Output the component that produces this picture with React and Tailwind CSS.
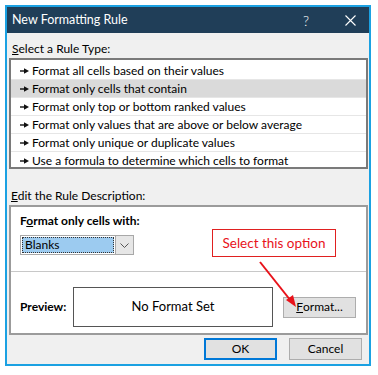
import React from "react";

// Rule type list shown in the top list box
const RULE_TYPES = [
  "Format all cells based on their values",
  "Format only cells that contain",
  "Format only top or bottom ranked values",
  "Format only values that are above or below average",
  "Format only unique or duplicate values",
  "Use a formula to determine which cells to format",
];

const FONT = { fontFamily: "Lato, 'Open Sans', sans-serif" };

function RuleArrow() {
  return (
    <svg width="9" height="6" viewBox="0 0 9 6" className="shrink-0">
      <path d="M0 3H5" stroke="#111" strokeWidth="1.4" />
      <path d="M4 0.2L9 3L4 5.8Z" fill="#111" />
    </svg>
  );
}

function Btn({ children, primary }) {
  return (
    <div
      className={
        "flex h-[22px] w-[73px] items-center justify-center bg-[#e1e1e1] text-[12px] text-black " +
        (primary ? "border-2 border-[#0078d7]" : "border border-[#adadad]")
      }
    >
      {children}
    </div>
  );
}

export default function App() {
  return (
    <div className="relative h-[375px] w-[378px] bg-white" style={FONT}>
      {/* Dialog */}
      <div className="ml-[5px] pt-[5px]">
        <div className="flex h-[361px] w-[366px] flex-col border-2 border-[#1ba1e2] bg-[#f0f0f0]">
          {/* Title bar */}
          <div className="flex h-[26px] shrink-0 items-center bg-[#203e58] pl-[5px] text-[12.5px] text-white">
            <span className="flex-1">New Formatting Rule</span>
            <span className="mr-[36px] text-[14px] font-light">?</span>
            <svg width="11" height="11" viewBox="0 0 11 11" className="mr-[13px]">
              <path d="M0.5 0.5L10.5 10.5M10.5 0.5L0.5 10.5" stroke="#fff" strokeWidth="1.1" />
            </svg>
          </div>

          {/* Select a Rule Type */}
          <div className="mt-[8px] pl-[5px] text-[12px] leading-[16px] text-black">
            <span className="underline">S</span>elect a Rule Type:
          </div>
          <div className="ml-[2px] mr-[1px] mt-[1px] h-[111px] overflow-hidden border-2 border-[#7a7a7a] bg-white pt-[2px]">
            {RULE_TYPES.map((rule, i) => (
              <div
                key={rule}
                className={
                  "flex h-[18px] items-center gap-[3px] border-b border-[#e6e6e6] pl-[9px] text-[12px] text-black " +
                  (i === 1 ? "bg-[#dadada]" : "")
                }
              >
                <RuleArrow />
                <span>{rule}</span>
              </div>
            ))}
          </div>

          {/* Edit the Rule Description */}
          <div className="mt-[19px] pl-[4px] text-[12px] leading-[16px] text-black">
            <span className="underline">E</span>dit the Rule Description:
          </div>
          <div className="ml-[2px] mr-[1px] mt-[1px] flex h-[130px] flex-col border-2 border-[#9b9b9b] bg-white">
            <div className="pl-[9px] pt-[6px] text-[12px] font-bold leading-[16px] text-black">
              F<span className="underline">o</span>rmat only cells with:
            </div>
            <div className="ml-[9px] mt-[6px] flex h-[20px] w-[114px] border border-[#a8a8a8] bg-white">
              <div className="m-[1px] flex flex-1 items-center border border-dotted border-[#333] bg-[#9ccbf0] pl-[2px] text-[12px] text-black">
                Blanks
              </div>
              <div className="flex w-[18px] items-center justify-center border-l border-[#a8a8a8] bg-[#e6e6e6]">
                <svg width="9" height="5" viewBox="0 0 9 5">
                  <path d="M0.5 0.5L4.5 4.5L8.5 0.5" stroke="#555" strokeWidth="1" fill="none" />
                </svg>
              </div>
            </div>
            <div className="mt-[16px] border-t border-[#c8c8c8]" />
            <div className="mt-[15px] flex items-center">
              <div className="w-[62px] pl-[9px] text-[12px] font-bold text-black">Preview:</div>
              <div className="flex h-[40px] w-[200px] items-center justify-center border border-[#555] bg-white text-[13px] text-black">
                No Format Set
              </div>
              <div className="ml-[10px] flex h-[21px] w-[73px] items-center justify-center border border-[#adadad] bg-[#e1e1e1] text-[12px] text-black">
                <span className="underline">F</span>ormat...
              </div>
            </div>
          </div>

          {/* Footer buttons */}
          <div className="mt-[3px] flex justify-end gap-[12px] pr-[7px]">
            <Btn primary>OK</Btn>
            <Btn>Cancel</Btn>
          </div>
        </div>
      </div>

      {/* Annotation callout */}
      <div className="absolute left-[212px] top-[229px] flex h-[28px] w-[124px] items-center justify-center border border-[#e02020] bg-white text-[13.5px] text-[#e8121a]">
        Select this option
      </div>
      <svg className="absolute left-0 top-0" width="378" height="375" viewBox="0 0 378 375">
        <path d="M260 262L291 301" stroke="#e8121a" strokeWidth="2" />
        <path d="M296 307L286 300L293 295Z" fill="#e8121a" />
      </svg>
    </div>
  );
}
